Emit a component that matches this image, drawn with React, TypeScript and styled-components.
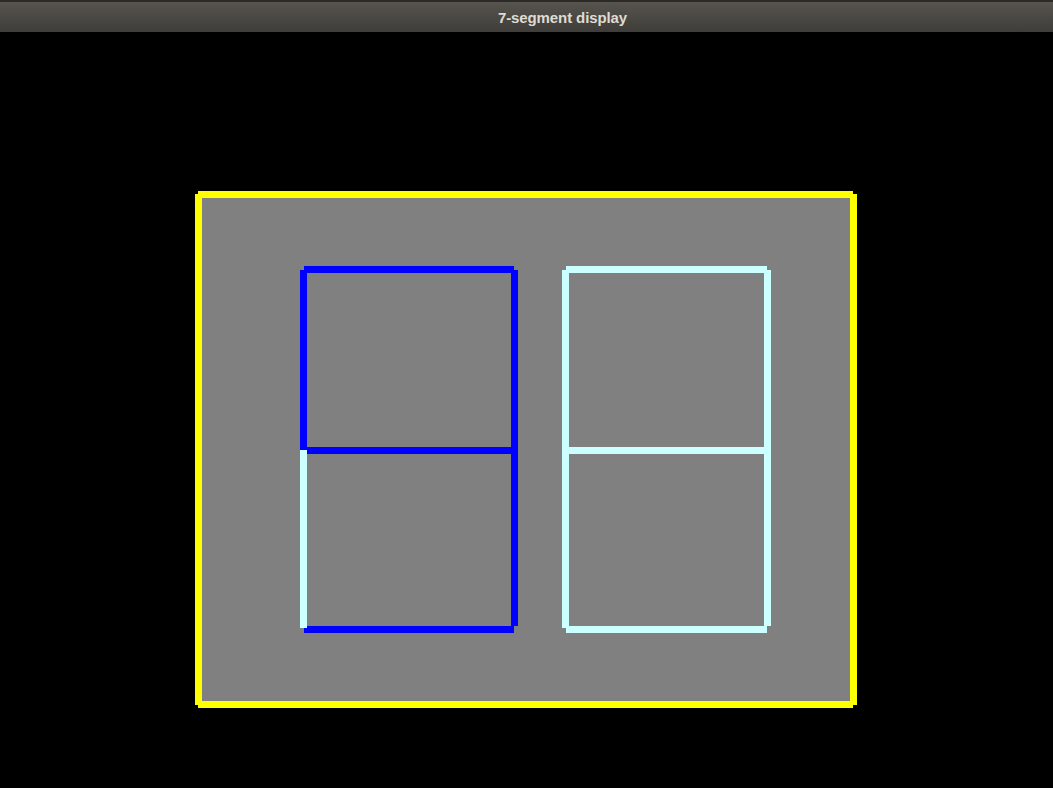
import React from "react";
import styled, { createGlobalStyle } from "styled-components";

const Global = createGlobalStyle`
  html, body { margin: 0; padding: 0; background: #000; }
  #root { width: 1053px; height: 788px; }
`;

const Window = styled.div`
  width: 1053px;
  height: 788px;
  display: flex;
  flex-direction: column;
  background: #000;
  overflow: hidden;
`;

const TitleBar = styled.div`
  height: 30px;
  flex: 0 0 30px;
  border-top: 2px solid #2b2a28;
  background: linear-gradient(#57544e, #3e3d39);
  display: flex;
  align-items: center;
  justify-content: center;
  padding-left: 72px;
  box-sizing: content-box;
`;

const Title = styled.span`
  font-family: "Liberation Sans", Arial, sans-serif;
  font-weight: bold;
  font-size: 15px;
  color: #dfdbd2;
  letter-spacing: -0.1px;
  padding-top: 1px;
`;

const Canvas = styled.div`
  flex: 1;
  background: #000;
  display: flex;
`;

const ON = "#0000ff";
const OFF = "#ccffff";

type Digit = {
  xl: number;
  xr: number;
  segs: boolean[]; // top, upper-right, lower-right, bottom, lower-left, upper-left, middle
};

const digits: Digit[] = [
  { xl: 300, xr: 511, segs: [true, true, true, true, false, true, true] },
  { xl: 562, xr: 764, segs: [false, false, false, false, false, false, false] },
];

function Seven({ d }: { d: Digit }) {
  const c = (on: boolean) => (on ? ON : OFF);
  const hx = d.xl + 4;
  const hw = d.xr + 3 - hx;
  const [a, b, cc, dd, e, f, g] = d.segs;
  return (
    <g>
      <rect x={hx} y={266} width={hw} height={7} fill={c(a)} />
      <rect x={hx} y={447} width={hw} height={7} fill={c(g)} />
      <rect x={hx} y={626} width={hw} height={7} fill={c(dd)} />
      <rect x={d.xl} y={270} width={7} height={180} fill={c(f)} />
      <rect x={d.xr} y={270} width={7} height={180} fill={c(b)} />
      <rect x={d.xl} y={450} width={7} height={178} fill={c(e)} />
      <rect x={d.xr} y={450} width={7} height={176} fill={c(cc)} />
    </g>
  );
}

export default function App() {
  return (
    <>
      <Global />
      <Window>
        <TitleBar>
          <Title>7-segment display</Title>
        </TitleBar>
        <Canvas>
          <svg
            width={1053}
            height={756}
            viewBox="0 32 1053 756"
            shapeRendering="crispEdges"
          >
            <rect x={198} y={194} width={655} height={511} fill="#808080" />
            <rect x={198} y={191} width={655} height={7} fill="#ffff00" />
            <rect x={850} y={194} width={7} height={511} fill="#ffff00" />
            <rect x={198} y={701} width={655} height={7} fill="#ffff00" />
            <rect x={195} y={194} width={7} height={511} fill="#ffff00" />
            {digits.map((d, i) => (
              <Seven key={i} d={d} />
            ))}
          </svg>
        </Canvas>
      </Window>
    </>
  );
}
